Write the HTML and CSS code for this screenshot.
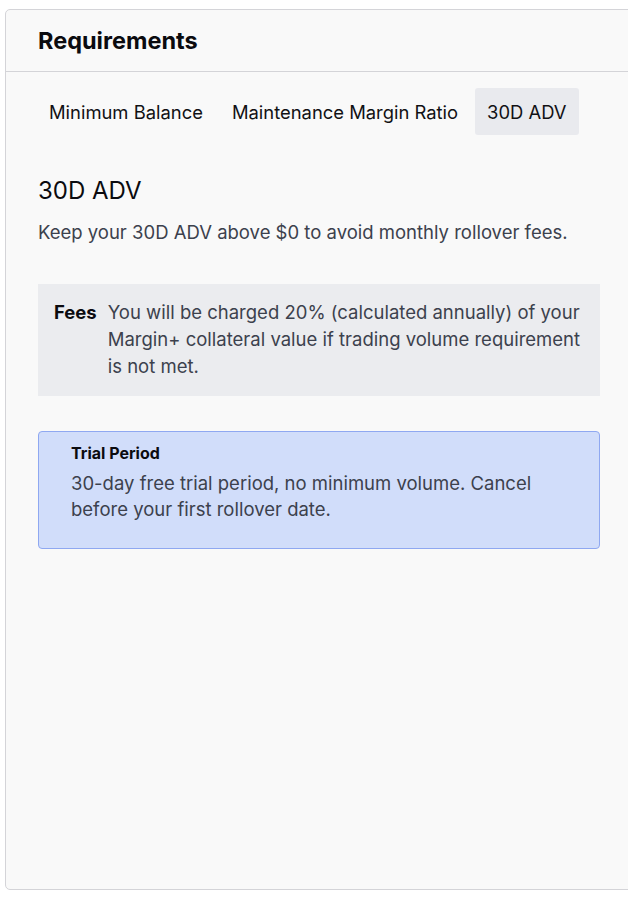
FILE: index.html
```html
<!DOCTYPE html>
<html>
<head>
<meta charset="utf-8">
<link rel="stylesheet" href="styles.css">
</head>
<body>
<section class="card">
  <header class="card-header">
    <h2 class="card-title">Requirements</h2>
  </header>
  <div class="card-body">
    <nav class="tabs">
      <button class="tab">Minimum Balance</button>
      <button class="tab">Maintenance Margin Ratio</button>
      <button class="tab tab-active">30D ADV</button>
    </nav>
    <h3 class="section-title">30D ADV</h3>
    <p class="section-desc">Keep your 30D ADV above $0 to avoid monthly rollover fees.</p>
    <div class="fees">
      <span class="fees-label">Fees</span>
      <span class="fees-text">You will be charged 20% (calculated annually) of your Margin+ collateral value if trading volume requirement is not met.</span>
    </div>
    <div class="notice">
      <div class="notice-title">Trial Period</div>
      <div class="notice-text">30-day free trial period, no minimum volume. Cancel before your first rollover date.</div>
    </div>
  </div>
</section>
</body>
</html>
```

FILE: styles.css
```css
* { box-sizing: border-box; }
html, body {
  margin: 0;
  padding: 0;
  background: #ffffff;
  font-family: Inter, "Noto Sans", sans-serif;
  overflow: hidden;
}
body {
  padding: 9px 0 0 5px;
  width: 628px;
  height: 898px;
}
.card {
  width: 660px;
  height: 881px;
  background: #f9f9f9;
  border: 1px solid #d4d4d8;
  border-radius: 5px;
}
.card-header {
  height: 62px;
  border-bottom: 1px solid #d4d4d8;
  display: flex;
  align-items: center;
  padding-left: 32px;
}
.card-title {
  margin: 0;
  font-size: 23.5px;
  font-weight: 700;
  color: #0b0b0f;
}
.card-body {
  padding: 16px 0 0 32px;
  width: 594px;
}
.tabs {
  display: flex;
  gap: 5px;
  margin-left: -1px;
}
.tab {
  font-family: inherit;
  font-size: 18.4px;
  color: #111114;
  background: transparent;
  border: none;
  border-radius: 3px;
  height: 47px;
  padding: 0 12px;
}
.tab-active {
  background: #e9eaee;
}
.section-title {
  margin: 42px 0 0;
  font-size: 24px;
  font-weight: 400;
  color: #0b0b0f;
  line-height: 28px;
}
.section-desc {
  margin: 13px 0 0;
  font-size: 18.5px;
  color: #3c414d;
  line-height: 28px;
}
.fees {
  margin-top: 38px;
  background: #ebecef;
  padding: 15px 16px 16px;
  display: flex;
  gap: 11px;
  font-size: 18.5px;
  line-height: 27px;
}
.fees-label {
  font-weight: 700;
  color: #0b0b0f;
}
.fees-text {
  color: #3c414d;
}
.notice {
  margin-top: 35px;
  background: #d1ddfa;
  border: 1px solid #8fa8f1;
  border-radius: 4px;
  padding: 10px 32px 26px;
}
.notice-title {
  font-size: 16px;
  font-weight: 700;
  color: #0b0b0f;
  line-height: 22px;
}
.notice-text {
  margin-top: 6px;
  font-size: 18.5px;
  line-height: 26px;
  color: #3c414d;
}
```
